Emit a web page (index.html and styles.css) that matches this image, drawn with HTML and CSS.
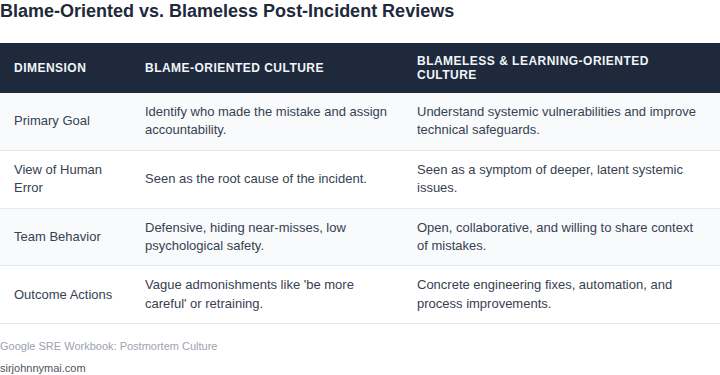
FILE: index.html
```html
<!DOCTYPE html>
<html>
<head>
<meta charset="utf-8">
<link rel="stylesheet" href="styles.css">
</head>
<body>
<h1 class="title">Blame-Oriented vs. Blameless Post-Incident Reviews</h1>
<table class="cmp">
  <colgroup>
    <col class="c1"><col class="c2"><col class="c3">
  </colgroup>
  <thead>
    <tr>
      <th>Dimension</th>
      <th>Blame-Oriented Culture</th>
      <th>Blameless &amp; Learning-Oriented Culture</th>
    </tr>
  </thead>
  <tbody>
    <tr>
      <td>Primary Goal</td>
      <td>Identify who made the mistake and assign accountability.</td>
      <td>Understand systemic vulnerabilities and improve technical safeguards.</td>
    </tr>
    <tr>
      <td>View of Human Error</td>
      <td>Seen as the root cause of the incident.</td>
      <td>Seen as a symptom of deeper, latent systemic issues.</td>
    </tr>
    <tr>
      <td>Team Behavior</td>
      <td>Defensive, hiding near-misses, low psychological safety.</td>
      <td>Open, collaborative, and willing to share context of mistakes.</td>
    </tr>
    <tr>
      <td>Outcome Actions</td>
      <td>Vague admonishments like 'be more careful' or retraining.</td>
      <td>Concrete engineering fixes, automation, and process improvements.</td>
    </tr>
  </tbody>
</table>
<footer class="foot">
  <p class="source">Google SRE Workbook: Postmortem Culture</p>
  <p class="site">sirjohnnymai.com</p>
</footer>
</body>
</html>
```
FILE: styles.css
```css
html, body {
  margin: 0;
  padding: 0;
  background: #ffffff;
  font-family: "Liberation Sans", Arial, sans-serif;
}
.title {
  margin: 0 0 21px 0;
  font-size: 18px;
  line-height: 22px;
  font-weight: bold;
  color: #1e293b;
}
.cmp {
  width: 720px;
  border-collapse: collapse;
  table-layout: fixed;
}
.c1 { width: 131px; }
.c2 { width: 272px; }
.c3 { width: 317px; }
.cmp th {
  background: #1e293b;
  color: #f1f5f9;
  font-size: 12px;
  line-height: 14px;
  font-weight: bold;
  text-transform: uppercase;
  letter-spacing: 0.04em;
  text-align: left;
  padding: 11px 14px;
  vertical-align: middle;
}
.cmp td {
  font-size: 13px;
  line-height: 18.4px;
  color: #374151;
  padding: 10px 14px;
  border-bottom: 1px solid #e2e8f0;
  vertical-align: middle;
}
.cmp tbody tr:nth-child(odd) td {
  background: #f8fafc;
}
.foot {
  margin-top: 11px;
}
.foot p {
  margin: 0;
  font-size: 11px;
  line-height: 22px;
}
.source { color: #9ca3af; }
.site { color: #4b5563; }
```
